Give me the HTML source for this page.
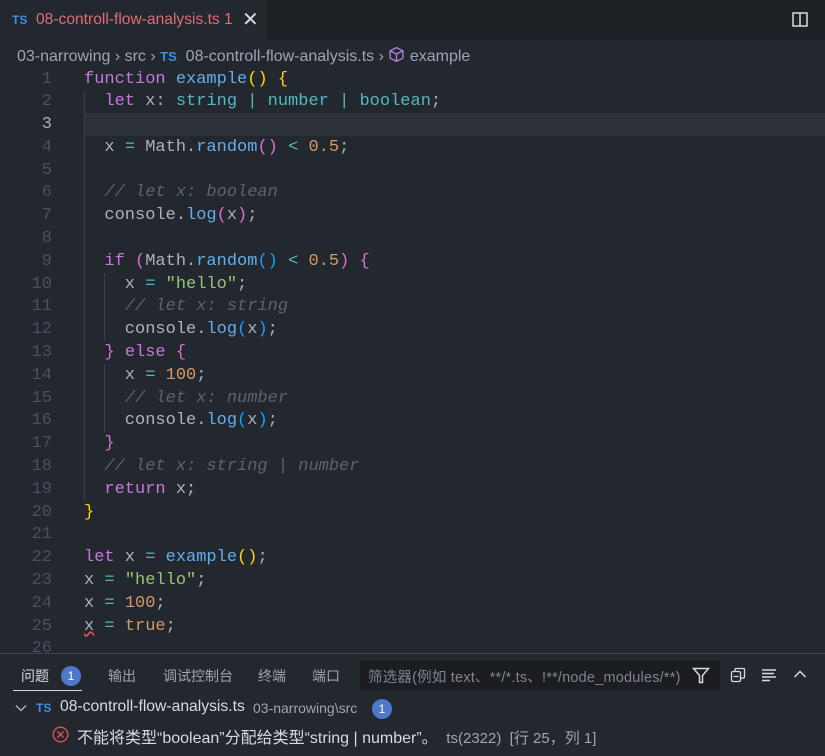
<!DOCTYPE html>
<html><head><meta charset="utf-8"><style>
*{margin:0;padding:0;box-sizing:border-box}
body{width:825px;height:756px;overflow:hidden;background:#23272e;font-family:"Liberation Sans","Noto Sans CJK SC",sans-serif;color:#abb2bf;position:relative}
.tabs{position:absolute;left:0;top:0;width:825px;height:40px;background:#1e2227}
.tab{position:absolute;left:0;top:0;width:268px;height:40px;background:#23272e;border-right:1px solid #181a1f}
.ts{color:#3b8eea;font-weight:bold;font-size:12px;position:absolute}
.crumb{position:absolute;top:46px;left:17px;font-size:16px;color:#9da5b4;white-space:nowrap}
.code{position:absolute;left:0;top:68.5px;width:825px;font-family:"Liberation Mono",monospace;font-size:17px}
.ln{height:22.8px;line-height:22.8px;white-space:pre;position:relative}
.ln .n{position:absolute;left:0;width:52px;text-align:right;color:#495162}
.ln .c{position:absolute;left:84px}
.k{color:#c678dd}.f{color:#61afef}.t{color:#56b6c2}.s{color:#98c379}.m{color:#d19a66}.o{color:#56b6c2}.cm{color:#5c6370;font-style:italic}
.y{color:#ffd700}.p{color:#da70d6}.b{color:#179fff}
.guide{position:absolute;width:1px;background:#3b4048}
.panel{position:absolute;left:0;top:653px;width:825px;height:103px;background:#23272e;border-top:1px solid #3e4452}
.pt{position:absolute;top:12px;font-size:14px;color:#9da5b4}
.badge{display:inline-block;width:20px;height:20px;border-radius:10px;background:#4d78cc;color:#fff;font-size:12px;text-align:center;line-height:20px}
</style></head><body>
<div class="tabs">
 <div class="tab">
  <span class="ts" style="left:12px;top:13px">TS</span>
  <span style="position:absolute;left:36px;top:11px;font-size:15.6px;color:#e06c75">08-controll-flow-analysis.ts 1</span>
  <span style="position:absolute;left:242px;top:7px;font-size:20px;color:#d7dae0">✕</span>
 </div>
 <svg style="position:absolute;left:792px;top:12px" width="17" height="16" viewBox="0 0 17 16"><rect x="1" y="1" width="14" height="13" fill="none" stroke="#d7dae0" stroke-width="1.5"/><line x1="8" y1="1" x2="8" y2="14" stroke="#d7dae0" stroke-width="1.5"/></svg>
</div>
<div class="crumb">03-narrowing <span>›</span> src <span>›</span> <span class="ts" style="position:static;font-size:13px">TS</span>&nbsp; 08-controll-flow-analysis.ts <span>›</span> <svg width="17" height="17" viewBox="0 0 16 16" style="vertical-align:-2px"><path d="M8 1.5L14 4.5V11.5L8 14.5L2 11.5V4.5Z M2 4.5L8 7.5L14 4.5 M8 7.5V14.5" fill="none" stroke="#b180d7" stroke-width="1.3"/></svg> example</div>
<div style="position:absolute;left:84px;top:113px;width:741px;height:23px;background:#2c313a"></div>
<div class="guide" style="left:84px;top:91px;height:410px"></div>
<div class="guide" style="left:104px;top:273px;height:68px"></div>
<div class="guide" style="left:104px;top:364px;height:68px"></div>
<div class="code">
<div class="ln"><span class="n">1</span><span class="c"><span class="k">function</span> <span class="f">example</span><span class="y">()</span> <span class="y">{</span></span></div>
<div class="ln"><span class="n">2</span><span class="c">  <span class="k">let</span> x: <span class="t">string</span> <span class="o">|</span> <span class="t">number</span> <span class="o">|</span> <span class="t">boolean</span>;</span></div>
<div class="ln"><span class="n" style="color:#abb2bf">3</span><span class="c"></span></div>
<div class="ln"><span class="n">4</span><span class="c">  x <span class="o">=</span> Math.<span class="f">random</span><span class="p">()</span> <span class="o">&lt;</span> <span class="m">0.5</span>;</span></div>
<div class="ln"><span class="n">5</span><span class="c"></span></div>
<div class="ln"><span class="n">6</span><span class="c">  <span class="cm">// let x: boolean</span></span></div>
<div class="ln"><span class="n">7</span><span class="c">  console.<span class="f">log</span><span class="p">(</span>x<span class="p">)</span>;</span></div>
<div class="ln"><span class="n">8</span><span class="c"></span></div>
<div class="ln"><span class="n">9</span><span class="c">  <span class="k">if</span> <span class="p">(</span>Math.<span class="f">random</span><span class="b">()</span> <span class="o">&lt;</span> <span class="m">0.5</span><span class="p">)</span> <span class="p">{</span></span></div>
<div class="ln"><span class="n">10</span><span class="c">    x <span class="o">=</span> <span class="s">"hello"</span>;</span></div>
<div class="ln"><span class="n">11</span><span class="c">    <span class="cm">// let x: string</span></span></div>
<div class="ln"><span class="n">12</span><span class="c">    console.<span class="f">log</span><span class="b">(</span>x<span class="b">)</span>;</span></div>
<div class="ln"><span class="n">13</span><span class="c">  <span class="p">}</span> <span class="k">else</span> <span class="p">{</span></span></div>
<div class="ln"><span class="n">14</span><span class="c">    x <span class="o">=</span> <span class="m">100</span>;</span></div>
<div class="ln"><span class="n">15</span><span class="c">    <span class="cm">// let x: number</span></span></div>
<div class="ln"><span class="n">16</span><span class="c">    console.<span class="f">log</span><span class="b">(</span>x<span class="b">)</span>;</span></div>
<div class="ln"><span class="n">17</span><span class="c">  <span class="p">}</span></span></div>
<div class="ln"><span class="n">18</span><span class="c">  <span class="cm">// let x: string | number</span></span></div>
<div class="ln"><span class="n">19</span><span class="c">  <span class="k">return</span> x;</span></div>
<div class="ln"><span class="n">20</span><span class="c"><span class="y">}</span></span></div>
<div class="ln"><span class="n">21</span><span class="c"></span></div>
<div class="ln"><span class="n">22</span><span class="c"><span class="k">let</span> x <span class="o">=</span> <span class="f">example</span><span class="y">()</span>;</span></div>
<div class="ln"><span class="n">23</span><span class="c">x <span class="o">=</span> <span class="s">"hello"</span>;</span></div>
<div class="ln"><span class="n">24</span><span class="c">x <span class="o">=</span> <span class="m">100</span>;</span></div>
<div class="ln"><span class="n">25</span><span class="c"><span style="text-decoration:underline wavy #e05252">x</span> <span class="o">=</span> <span class="m">true</span>;</span></div>
<div class="ln"><span class="n">26</span><span class="c"></span></div>
</div>
<div class="panel">
 <span class="pt" style="left:21px;color:#d7dae0">问题</span>
 <span class="badge" style="position:absolute;left:61px;top:12px">1</span>
 <div style="position:absolute;left:13px;top:36px;width:69px;height:1px;background:#d7dae0"></div>
 <span class="pt" style="left:108px">输出</span>
 <span class="pt" style="left:163px">调试控制台</span>
 <span class="pt" style="left:258px">终端</span>
 <span class="pt" style="left:312px">端口</span>
 <div style="position:absolute;left:360px;top:7px;width:360px;height:29px;background:#1b1d23"></div>
 <span class="pt" style="left:368px;color:#7f848e;font-size:14.5px;letter-spacing:0.2px">筛选器(例如 text、**/*.ts、!**/node_modules/**)</span>
 <svg style="position:absolute;left:692px;top:13px" width="18" height="17" viewBox="0 0 18 17"><path d="M1.5 1.5H16.5L10.5 8.5V15.5H7.5V8.5Z" fill="none" stroke="#d7dae0" stroke-width="1.5"/></svg>
 <svg style="position:absolute;left:730px;top:13px" width="16" height="16" viewBox="0 0 16 16"><rect x="1.5" y="4.5" width="9" height="10" rx="1.5" fill="none" stroke="#d7dae0" stroke-width="1.3"/><path d="M5 4.5V2.5Q5 1.5 6 1.5H13.5Q14.5 1.5 14.5 2.5V10Q14.5 11 13.5 11H10.5 M3.5 9.5H8.5" fill="none" stroke="#d7dae0" stroke-width="1.3"/></svg>
 <svg style="position:absolute;left:761px;top:14px" width="16" height="14" viewBox="0 0 16 14"><path d="M1 2H15M1 5.5H13M1 9H15M1 12.5H9" stroke="#d7dae0" stroke-width="1.4"/></svg>
 <svg style="position:absolute;left:793px;top:15px" width="14" height="10" viewBox="0 0 14 10"><path d="M1.5 8L7 2.5L12.5 8" fill="none" stroke="#d7dae0" stroke-width="1.5"/></svg>
 <svg style="position:absolute;left:15px;top:50px" width="12" height="8" viewBox="0 0 12 8"><path d="M1 1.5L6 6.5L11 1.5" fill="none" stroke="#abb2bf" stroke-width="1.4"/></svg>
 <span class="ts" style="left:36px;top:47px">TS</span>
 <span style="position:absolute;left:60px;top:44px;font-size:15.7px;color:#d7dae0">08-controll-flow-analysis.ts</span>
 <span style="position:absolute;left:253px;top:46px;font-size:14px;color:#9da5b4">03-narrowing\src</span>
 <span class="badge" style="position:absolute;left:372px;top:45px">1</span>
 <svg style="position:absolute;left:52px;top:72px" width="17" height="17" viewBox="0 0 17 17"><circle cx="8.5" cy="8.5" r="7.3" fill="none" stroke="#e05252" stroke-width="1.4"/><path d="M5.5 5.5L11.5 11.5M11.5 5.5L5.5 11.5" stroke="#e05252" stroke-width="1.4"/></svg>
 <span style="position:absolute;left:77px;top:70px;font-size:16px;color:#d7dae0;white-space:nowrap">不能将类型“boolean”分配给类型“string | number”。 <span style="color:#9da5b4;font-size:15px">&nbsp;ts(2322) &nbsp;[行 25，列 1]</span></span>
</div>
</body></html>
